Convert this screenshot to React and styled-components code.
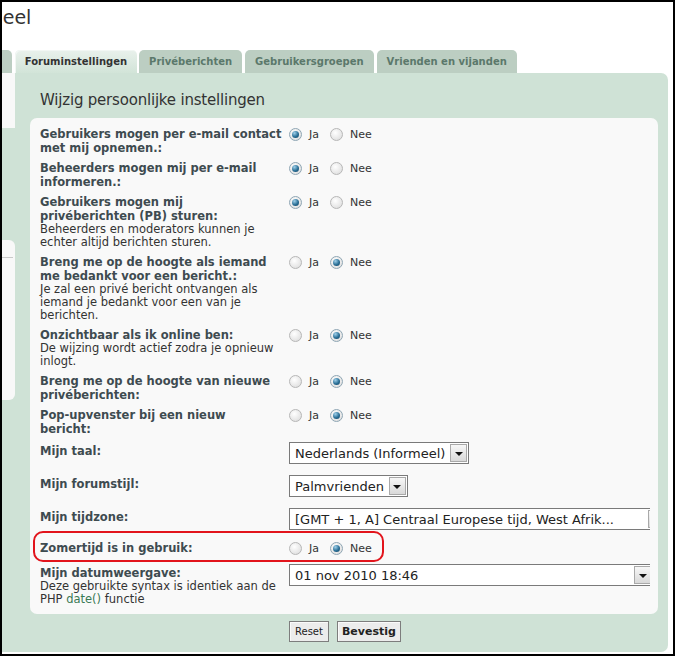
import React from "react";
import styled, { createGlobalStyle } from "styled-components";

const GlobalStyle = createGlobalStyle`
  body {
    margin: 0;
    background: #fff;
    font-family: "DejaVu Sans", Verdana, sans-serif;
  }
`;

const Frame = styled.div`
  width: 675px;
  height: 656px;
  box-sizing: border-box;
  border: 2px solid #000;
  background: #fff;
  overflow: hidden;
  display: flex;
  flex-direction: column;
`;

const Header = styled.div`
  height: 48px;
  flex: none;
  box-sizing: border-box;
  padding-top: 3px;
`;

const Title = styled.h1`
  margin: 0 0 0 -35px;
  font-size: 19px;
  line-height: 24px;
  font-weight: normal;
  color: #333;
  white-space: nowrap;
`;

const TabBar = styled.ul`
  display: flex;
  gap: 3px;
  margin: 0;
  padding: 0;
  list-style: none;
  height: 23px;
  flex: none;
`;

const Tab = styled.li`
  flex: none;
  padding: 0 10px;
  line-height: 23px;
  font-size: 10px;
  font-weight: bold;
  white-space: nowrap;
  border-radius: 5px 5px 0 0;
  color: ${(p) => (p.$active ? "#333" : "#5b786b")};
  background: ${(p) =>
    p.$active ? "linear-gradient(#e9f1ec, #d2e4d8)" : "#bccec2"};
  box-shadow: ${(p) => (p.$active ? "inset 1px 1px 0 #f2f7f4" : "none")};
  margin-left: ${(p) => p.$offset || 0}px;
  margin-right: ${(p) => (p.$active ? -1 : 0)}px;
`;

const Panel = styled.div`
  display: flex;
  background: #cfe2d6;
  border-radius: 0 7px 7px 0;
  margin-right: 5px;
  flex: none;
`;

const SideStrip = styled.div`
  width: 13px;
  flex: none;
  display: flex;
  flex-direction: column;
`;

const SideBlock = styled.div`
  height: ${(p) => p.$height}px;
  margin-top: ${(p) => p.$gap || 0}px;
  background: #f8f8f8;
  border-radius: ${(p) => (p.$round ? "0 6px 6px 0" : "0")};
`;

const SideRule = styled.div`
  height: 1px;
  margin-top: 17px;
  background: #c9c9c9;
  margin-right: 2px;
`;

const Main = styled.div`
  flex: 1;
  min-width: 0;
  padding: 0 10px 10px 15px;
`;

const Heading = styled.h2`
  margin: 0;
  padding: 17px 0 8px 10px;
  font-size: 15px;
  letter-spacing: -0.2px;
  line-height: 20px;
  font-weight: normal;
  color: #333;
`;

const FormBox = styled.div`
  background: #f9f9f9;
  border-radius: 7px;
  padding: 6px 8px 4px 10px;
`;

const Row = styled.div`
  position: relative;
  display: grid;
  grid-template-columns: 249px minmax(0, 1fr);
  padding: ${(p) => (p.$field ? "3px 0 4px" : "3px 0")};
`;

const Label = styled.div`
  font-size: 11.5px;
  line-height: 14px;
  font-weight: bold;
  color: #3e4b50;
  white-space: nowrap;
  margin-top: ${(p) => (p.$field ? 2 : 0)}px;
`;

const Desc = styled.span`
  display: block;
  font-weight: normal;
  line-height: 13px;
  color: #333;
`;

const DocLink = styled.a`
  color: #3a7a55;
  text-decoration: none;
`;

const Value = styled.div`
  overflow: hidden;
  display: flex;
  align-items: flex-start;
`;

const RadioGroup = styled.div`
  display: flex;
  align-items: center;
  height: 14px;
  padding-bottom: 3px;
  font-size: 11px;
  color: #333;
`;

const Radio = styled.span`
  position: relative;
  width: 13px;
  height: 13px;
  box-sizing: border-box;
  border-radius: 50%;
  border: 1px solid ${(p) => (p.$checked ? "#8fa6b4" : "#b7b7b7")};
  background: radial-gradient(circle at 40% 35%, #ffffff, #e4e4e4 70%, #d2d2d2);
  margin: 0 7px 0 ${(p) => (p.$first ? 0 : 11)}px;
  flex: none;

  &::after {
    content: "";
    display: ${(p) => (p.$checked ? "block" : "none")};
    position: absolute;
    left: 2px;
    top: 2px;
    width: 7px;
    height: 7px;
    border-radius: 50%;
    background: radial-gradient(circle at 35% 30%, #9fd0ea, #2a6f96 55%, #0f3f5e);
  }
`;

const Select = styled.div`
  display: inline-flex;
  align-items: center;
  flex: none;
  height: 22px;
  width: ${(p) => (p.$width ? `${p.$width}px` : "auto")};
  box-sizing: border-box;
  border: 1px solid #7a7a7a;
  background: #fff;
  font-size: 13px;
  color: #222;
  margin-bottom: 4px;
`;

const SelectText = styled.span`
  flex: 1;
  padding: 0 4px 0 5px;
  white-space: nowrap;
`;

const DropButton = styled.span`
  width: 17px;
  height: 18px;
  margin: 1px;
  box-sizing: border-box;
  border: 1px solid #a9a9a9;
  background: linear-gradient(#f7f7f7, #d9d9d9);
  display: flex;
  align-items: center;
  justify-content: center;
  flex: none;

  &::before {
    content: "";
    border-left: 4px solid transparent;
    border-right: 4px solid transparent;
    border-top: 4px solid #111;
    margin-top: 1px;
  }
`;

const Marker = styled.div`
  position: absolute;
  left: -7px;
  top: -7px;
  width: 351px;
  height: 31px;
  box-sizing: border-box;
  border: 2px solid #e2141c;
  border-radius: 10px;
  pointer-events: none;
`;

const ButtonRow = styled.div`
  display: flex;
  gap: 8px;
  padding: 7px 0 0 259px;
`;

const Button = styled.button`
  height: 21px;
  box-sizing: border-box;
  border: 1px solid #7d7d7d;
  background: #ececec;
  box-shadow: inset 1px 1px 0 #fafafa;
  font-family: "DejaVu Sans", Verdana, sans-serif;
  font-size: ${(p) => (p.$bold ? 11 : 10)}px;
  font-weight: ${(p) => (p.$bold ? "bold" : "normal")};
  color: #222;
  padding: 0 ${(p) => (p.$bold ? 4 : 5)}px;
`;

const toggles = [
  {
    lines: ["Gebruikers mogen per e-mail contact", "met mij opnemen.:"],
    yes: true,
  },
  { lines: ["Beheerders mogen mij per e-mail", "informeren.:"], yes: true },
  {
    lines: ["Gebruikers mogen mij", "privéberichten (PB) sturen:"],
    desc: ["Beheerders en moderators kunnen je", "echter altijd berichten sturen."],
    yes: true,
  },
  {
    lines: ["Breng me op de hoogte als iemand", "me bedankt voor een bericht.:"],
    desc: [
      "Je zal een privé bericht ontvangen als",
      "iemand je bedankt voor een van je",
      "berichten.",
    ],
    yes: false,
  },
  {
    lines: ["Onzichtbaar als ik online ben:"],
    desc: ["De wijzing wordt actief zodra je opnieuw", "inlogt."],
    yes: false,
  },
  { lines: ["Breng me op de hoogte van nieuwe", "privéberichten:"], yes: false },
  { lines: ["Pop-upvenster bij een nieuw", "bericht:"], yes: false },
];

function Lines({ items }) {
  return items.map((line, i) => (
    <React.Fragment key={i}>
      {i > 0 && <br />}
      {line}
    </React.Fragment>
  ));
}

function YesNo({ yes }) {
  return (
    <RadioGroup>
      <Radio $first $checked={yes} />
      Ja
      <Radio $checked={!yes} />
      Nee
    </RadioGroup>
  );
}

function Dropdown({ value, width }) {
  return (
    <Select $width={width}>
      <SelectText>{value}</SelectText>
      <DropButton />
    </Select>
  );
}

export default function App() {
  return (
    <>
      <GlobalStyle />
      <Frame>
        <Header>
          <Title>paneel</Title>
        </Header>
        <TabBar>
          <Tab $offset={-47}>Profiel</Tab>
          <Tab $active>Foruminstellingen</Tab>
          <Tab>Privéberichten</Tab>
          <Tab>Gebruikersgroepen</Tab>
          <Tab>Vrienden en vijanden</Tab>
        </TabBar>
        <Panel>
          <SideStrip>
            <SideBlock $height={55} />
            <SideBlock $height={160} $gap={112} $round>
              <SideRule />
            </SideBlock>
          </SideStrip>
          <Main>
            <Heading>Wijzig persoonlijke instellingen</Heading>
            <FormBox>
              {toggles.map((t, i) => (
                <Row key={i}>
                  <Label>
                    <Lines items={t.lines} />
                    {t.desc && (
                      <Desc>
                        <Lines items={t.desc} />
                      </Desc>
                    )}
                  </Label>
                  <Value>
                    <YesNo yes={t.yes} />
                  </Value>
                </Row>
              ))}
              <Row $field>
                <Label $field>Mijn taal:</Label>
                <Value>
                  <Dropdown value="Nederlands (Informeel)" />
                </Value>
              </Row>
              <Row $field>
                <Label $field>Mijn forumstijl:</Label>
                <Value>
                  <Dropdown value="Palmvrienden" />
                </Value>
              </Row>
              <Row $field>
                <Label $field>Mijn tijdzone:</Label>
                <Value>
                  <Dropdown
                    value="[GMT + 1, A] Centraal Europese tijd, West Afrik..."
                    width={378}
                  />
                </Value>
              </Row>
              <Row>
                <Marker />
                <Label>Zomertijd is in gebruik:</Label>
                <Value>
                  <YesNo yes={false} />
                </Value>
              </Row>
              <Row $field>
                <Label $field>
                  Mijn datumweergave:
                  <Desc>
                    Deze gebruikte syntax is identiek aan de
                    <br />
                    PHP <DocLink href="#">date()</DocLink> functie
                  </Desc>
                </Label>
                <Value>
                  <Dropdown value="01 nov 2010 18:46" width={364} />
                </Value>
              </Row>
            </FormBox>
            <ButtonRow>
              <Button>Reset</Button>
              <Button $bold>Bevestig</Button>
            </ButtonRow>
          </Main>
        </Panel>
      </Frame>
    </>
  );
}
